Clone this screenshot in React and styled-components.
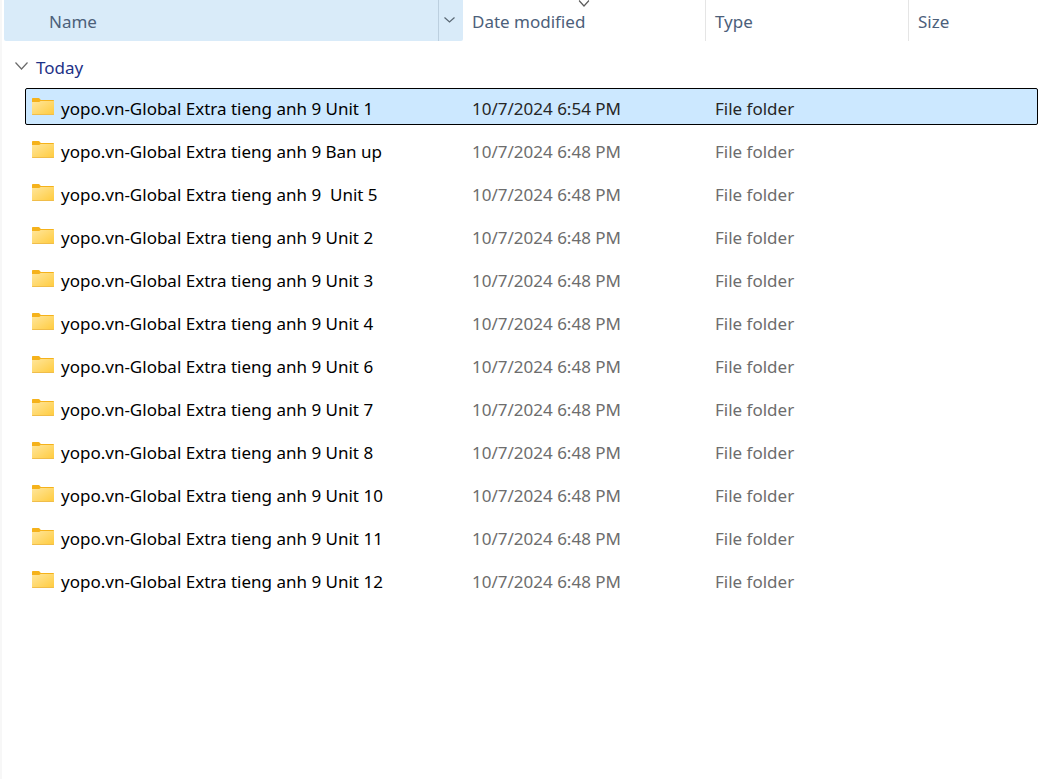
import React, { useState } from "react";
import styled, { createGlobalStyle } from "styled-components";

const GlobalStyle = createGlobalStyle`
  * { box-sizing: border-box; }
  body {
    margin: 0;
    background: #ffffff;
    color: #000000;
    font-family: "Noto Sans", "Open Sans", sans-serif;
    font-size: 17px;
    line-height: 24px;
  }
`;

const Pane = styled.main`
  min-height: 100vh;
  padding: 0 4px 16px 2px;
  border-left: 2px solid #f7f7f7;
`;

const FileTable = styled.table`
  display: block;
  width: 100%;
`;

const TableHead = styled.thead`
  display: block;
`;

const TableBody = styled.tbody`
  display: flex;
  flex-direction: column;
  gap: 6px;
`;

const HeaderRow = styled.tr`
  display: grid;
  grid-template-columns: 459px 243px 203px minmax(0, 1fr);
  height: 41px;
`;

const HeaderCell = styled.th`
  position: relative;
  display: flex;
  padding: 0;
  font-weight: 400;
  text-align: left;
  border-right: ${(p) => (p.$divided ? "1px solid #e5e5e5" : "0")};
  background: ${(p) => (p.$active ? "#d9ebf9" : "transparent")};
  border-radius: ${(p) => (p.$active ? "0 0 2px 2px" : "0")};
`;

const SortButton = styled.button`
  flex: 1;
  padding: 2px 0 0 ${(p) => (p.$inset ? "45px" : "9px")};
  border: 0;
  background: none;
  color: #4c607a;
  font: inherit;
  text-align: left;
`;

const FilterButton = styled.button`
  display: grid;
  place-items: center;
  width: 25px;
  padding: 0 4px 2px 0;
  border: 0;
  border-left: 1px solid #bccfdf;
  background: none;
`;

const SortMark = styled.span`
  position: absolute;
  top: 0;
  left: 50%;
  display: flex;
  transform: translateX(-50%);
`;

const GroupRow = styled.tr`
  display: block;
  padding: 15px 0 2px;
`;

const GroupCell = styled.th`
  display: block;
  padding: 0;
  font-weight: 400;
  text-align: left;
`;

const GroupButton = styled.button`
  display: flex;
  align-items: center;
  gap: 8px;
  padding: 0 0 0 11px;
  border: 0;
  background: none;
  color: #1e3287;
  font: inherit;

  svg {
    margin-bottom: 4px;
  }
`;

const FileRow = styled.tr`
  display: grid;
  grid-template-columns: 437px 243px 203px minmax(0, 1fr);
  align-items: center;
  height: 37px;
  margin-left: 21px;
  border: 1px solid ${(p) => (p.$selected ? "#000000" : "transparent")};
  border-radius: 2px;
  background: ${(p) => (p.$selected ? "#cce8ff" : "transparent")};
  color: ${(p) => (p.$selected ? "#262626" : "#6d6d6d")};
`;

const NameCell = styled.td`
  display: flex;
  align-items: center;
  gap: 7px;
  padding: 4px 0 0 6px;
  color: #000000;
  white-space: pre;
`;

const DetailCell = styled.td`
  padding: 4px 0 0 9px;
  white-space: nowrap;
`;

const FolderSvg = styled.svg`
  flex: none;
  margin-bottom: 6px;
`;

function Chevron({ width, height, color }) {
  return (
    <svg width={width} height={height} viewBox={`0 0 ${width} ${height}`} fill="none" aria-hidden="true">
      <path
        d={`M0.5 0.5 L${width / 2} ${height - 1} L${width - 0.5} 0.5`}
        stroke={color}
        strokeWidth="1.2"
      />
    </svg>
  );
}

function FolderIcon() {
  return (
    <FolderSvg width="22" height="18" viewBox="0 0 22 18" aria-hidden="true">
      <path d="M0 1.8Q0 1 .8 1H6.6Q7.2 1 7.6 1.5L8.8 3H21.2Q22 3 22 3.8V10H0Z" fill="#f5b21b" />
      <path d="M0 5H7.2L8.6 4H22V17.2Q22 18 21.2 18H.8Q0 18 0 17.2Z" fill="url(#folder-face)" />
      <path d="M0 17H22V17.2Q22 18 21.2 18H.8Q0 18 0 17.2Z" fill="#f0bd4a" />
    </FolderSvg>
  );
}

const files = [
  "Unit 1",
  "Ban up",
  " Unit 5",
  "Unit 2",
  "Unit 3",
  "Unit 4",
  "Unit 6",
  "Unit 7",
  "Unit 8",
  "Unit 10",
  "Unit 11",
  "Unit 12",
].map((unit, i) => ({
  name: `yopo.vn-Global Extra tieng anh 9 ${unit}`,
  modified: i === 0 ? "10/7/2024 6:54 PM" : "10/7/2024 6:48 PM",
  type: "File folder",
}));

const GradientDefs = styled.svg`
  position: absolute;
`;

export default function App() {
  const [selected, setSelected] = useState(0);
  const [open, setOpen] = useState(true);

  return (
    <Pane>
      <GlobalStyle />
      <GradientDefs width="0" height="0" aria-hidden="true">
        <defs>
          <linearGradient id="folder-face" x1="0" y1="0" x2="1" y2="1">
            <stop offset="0" stopColor="#ffe69c" />
            <stop offset="1" stopColor="#ffcb3d" />
          </linearGradient>
        </defs>
      </GradientDefs>
      <FileTable>
        <TableHead>
          <HeaderRow>
            <HeaderCell scope="col" $active>
              <SortButton type="button" $inset>Name</SortButton>
              <FilterButton type="button" aria-label="Filter by name">
                <Chevron width={11} height={6} color="#5a6874" />
              </FilterButton>
            </HeaderCell>
            <HeaderCell scope="col" aria-sort="descending" $divided>
              <SortButton type="button">Date modified</SortButton>
              <SortMark>
                <Chevron width={11} height={7} color="#5c5c5c" />
              </SortMark>
            </HeaderCell>
            <HeaderCell scope="col" $divided>
              <SortButton type="button">Type</SortButton>
            </HeaderCell>
            <HeaderCell scope="col">
              <SortButton type="button">Size</SortButton>
            </HeaderCell>
          </HeaderRow>
        </TableHead>
        <TableBody>
          <GroupRow>
            <GroupCell colSpan={4} scope="rowgroup">
              <GroupButton type="button" aria-expanded={open} onClick={() => setOpen(!open)}>
                <Chevron width={13} height={8} color="#6b6b6b" />
                Today
              </GroupButton>
            </GroupCell>
          </GroupRow>
          {open &&
            files.map((file, i) => (
              <FileRow
                key={file.name}
                $selected={i === selected}
                aria-selected={i === selected}
                onClick={() => setSelected(i)}
              >
                <NameCell>
                  <FolderIcon />
                  {file.name}
                </NameCell>
                <DetailCell>{file.modified}</DetailCell>
                <DetailCell>{file.type}</DetailCell>
                <DetailCell />
              </FileRow>
            ))}
        </TableBody>
      </FileTable>
    </Pane>
  );
}
